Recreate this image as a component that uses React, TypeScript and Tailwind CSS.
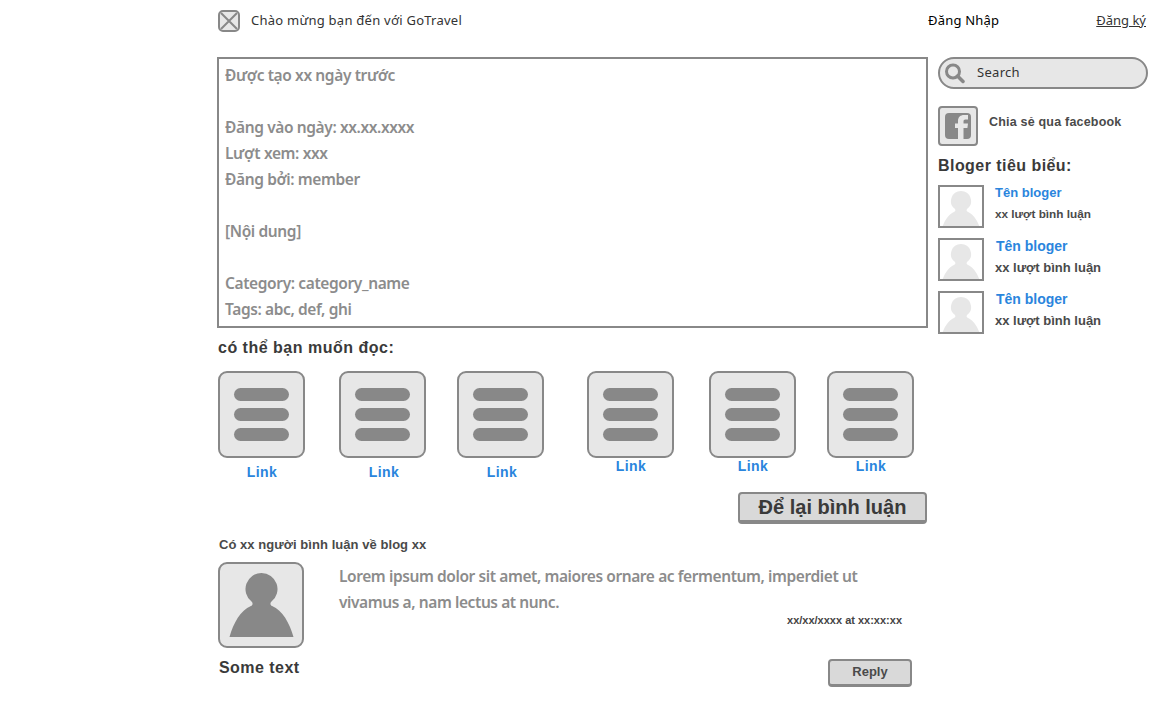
import React from "react";

const Person = ({ color, className }: { color: string; className: string }) => (
  <svg viewBox="0 0 64 64" className={`shrink-0 ${className}`} style={{ fill: color }}>
    <path d="M32 0a16 16 0 0 0-10 28.500c1.600 1.400 1.400 3.600-.6 4.600C11 37.500 4 50 0 64h64c-4-14-11-26.500-21.400-30.900-2-1-2.200-3.200-.6-4.600A16 16 0 0 0 32 0z" />
  </svg>
);

const Tile = ({ className, labelClass }: { className: string; labelClass: string }) => (
  <div className={`flex w-[87px] flex-col items-center ${className}`}>
    <div className="flex h-[87px] w-[87px] flex-col items-center justify-center gap-[7px] rounded-[9px] border-2 border-[#888] bg-[#e7e7e7]">
      <div className="h-[13px] w-[55px] rounded-full bg-[#888]" />
      <div className="h-[13px] w-[55px] rounded-full bg-[#888]" />
      <div className="h-[13px] w-[55px] rounded-full bg-[#888]" />
    </div>
    <a className={`text-[14px] leading-[16px] font-bold tracking-[0.4px] text-[#2a85dd] ${labelClass}`}>Link</a>
  </div>
);

const Blogger = ({ nameClass, subClass, gapClass }: { nameClass: string; subClass: string; gapClass: string }) => (
  <div className="flex h-[43px] items-start">
    <div className="flex h-[43px] w-[46px] items-start justify-center overflow-hidden border-2 border-[#888] bg-white pt-[4px]">
      <Person color="#e7e7e7" className="h-[40px] w-[40px]" />
    </div>
    <div className="ml-[11px] flex flex-col">
      <span className={`font-bold text-[#2a85dd] ${nameClass}`}>Tên bloger</span>
      <span className={`font-bold text-[#4a4a4a] ${subClass} ${gapClass}`}>xx lượt bình luận</span>
    </div>
  </div>
);

export default function App() {
  return (
    <div className="h-[708px] w-[1168px] overflow-hidden bg-white pl-[218px] font-['Liberation_Sans',sans-serif] text-[#333]">
      {/* top bar */}
      <header className="flex h-[57px] items-start pt-[10px]">
        <svg width="22" height="22" viewBox="0 0 22 22" className="shrink-0">
          <rect x="1" y="1" width="20" height="20" rx="4" fill="#e7e7e7" stroke="#888" strokeWidth="2" />
          <path d="M3 3l16 16M19 3L3 19" stroke="#888" strokeWidth="2" />
        </svg>
        <span className="ml-[11px] font-['Noto_Sans',sans-serif] text-[13px] leading-[20px] tracking-[0.25px]">Chào mừng bạn đến với GoTravel</span>
        <span className="ml-[466px] font-['Noto_Sans',sans-serif] text-[13px] leading-[20px] tracking-[0.2px] text-black">Đăng Nhập</span>
        <a className="ml-[97px] font-['Noto_Sans',sans-serif] text-[13px] leading-[20px] underline">Đăng ký</a>
      </header>

      <div className="flex">
        {/* main column */}
        <main className="-ml-px w-[711px]">
          <div className="h-[271px] w-[711px] border-2 border-[#888] px-[6px] pt-[3px] font-['Noto_Sans',sans-serif] text-[15.500px] leading-[26px] font-semibold tracking-[-0.38px] text-[#8c8c8c]">
            <p>Được tạo xx ngày trước</p>
            <p>&nbsp;</p>
            <p>Đăng vào ngày: xx.xx.xxxx</p>
            <p>Lượt xem: xxx</p>
            <p>Đăng bởi: member</p>
            <p>&nbsp;</p>
            <p>[Nội dung]</p>
            <p>&nbsp;</p>
            <p>Category: category_name</p>
            <p>Tags: abc, def, ghi</p>
          </div>

          <div className="pr-px pl-px">
            <h2 className="mt-[10px] text-[16px] leading-[20px] font-bold tracking-[0.5px] text-[#3a3a3a]">có thể bạn muốn đọc:</h2>
            <div className="mt-[13px] flex items-start">
              <Tile className="" labelClass="mt-[6px] ml-[1px]" />
              <Tile className="ml-[34px]" labelClass="mt-[6px] ml-[3px]" />
              <Tile className="ml-[31px]" labelClass="mt-[6px] ml-[3px]" />
              <Tile className="ml-[43px]" labelClass="mt-0 ml-[1px]" />
              <Tile className="ml-[35px]" labelClass="mt-0 ml-[1px]" />
              <Tile className="ml-[31px]" labelClass="mt-0 ml-[1px]" />
            </div>
            <div className="mt-[12px] flex justify-end">
              <button className="h-[32px] w-[189px] rounded-[4px] border-2 border-b-[4px] border-[#888] bg-[#d9d9d9] text-[20px] leading-[24px] font-bold text-[#3a3a3a]">Để lại bình luận</button>
            </div>
            <p className="mt-[13px] ml-px text-[13px] leading-[16px] font-bold tracking-[0.05px] text-[#4a4a4a]">Có xx người bình luận về blog xx</p>

            <div className="mt-[9px] flex">
              <div className="w-[121px] shrink-0">
                <div className="flex h-[86px] w-[86px] items-end justify-center rounded-[9px] border-2 border-[#888] bg-[#e7e7e7] pb-[9px]">
                  <Person color="#888" className="h-[64px] w-[65px]" />
                </div>
                <p className="mt-[10px] ml-px text-[16px] leading-[20px] font-bold tracking-[0.45px] text-[#3a3a3a]">Some text</p>
              </div>
              <div className="w-[573px] pt-px">
                <p className="font-['Noto_Sans',sans-serif] text-[15.500px] leading-[26px] font-semibold tracking-[-0.41px] text-[#8c8c8c]">
                  Lorem ipsum dolor sit amet, maiores ornare ac fermentum, imperdiet ut
                  <br />
                  vivamus a, nam lectus at nunc.
                </p>
                <p className="-mt-[2px] pr-[10px] text-right text-[11px] leading-[14px] font-bold text-[#444]">xx/xx/xxxx at xx:xx:xx</p>
                <div className="mt-[32px] flex justify-end">
                  <button className="h-[28px] w-[84px] rounded-[4px] border-2 border-b-[3px] border-[#888] bg-[#d9d9d9] pb-px text-[13px] leading-[18px] font-bold text-[#4a4a4a]">Reply</button>
                </div>
              </div>
            </div>
          </div>
        </main>

        {/* sidebar */}
        <aside className="ml-[10px] w-[210px]">
          <div className="flex h-[32px] items-center rounded-full border-2 border-[#888] bg-[#e7e7e7] pl-[5px]">
            <svg width="20" height="22" viewBox="0 0 20 22" className="shrink-0">
              <circle cx="8" cy="9.500" r="6.500" fill="none" stroke="#888" strokeWidth="3" />
              <path d="M12.500 14l5.500 5.500" stroke="#888" strokeWidth="3.500" strokeLinecap="round" />
            </svg>
            <span className="ml-[12px] font-['Noto_Sans',sans-serif] text-[13px] tracking-[0.3px]">Search</span>
          </div>

          <div className="mt-[17px] flex items-start">
            <div className="flex h-[40px] w-[40px] items-center justify-center rounded-[4px] border-2 border-[#888] bg-[#e7e7e7]">
              <svg width="26" height="26" viewBox="0 0 26 26">
                <rect width="26" height="26" rx="4" fill="#888" />
                <path d="M13 26V15h-3v-4.500h3V8c0-4 2.500-6 6-6h4v4.500h-2.500c-1.500 0-2 .7-2 2v2H23l-.6 4.500h-3.900V26z" fill="#e7e7e7" />
              </svg>
            </div>
            <span className="mt-[8px] ml-[11px] text-[12.500px] leading-[16px] font-bold tracking-[0.2px] text-[#4a4a4a]">Chia sẻ qua facebook</span>
          </div>

          <h3 className="mt-[10px] text-[16px] leading-[20px] font-bold tracking-[0.45px] text-[#3a3a3a]">Bloger tiêu biểu:</h3>

          <div className="mt-[9px] flex flex-col gap-[10px]">
            <Blogger nameClass="text-[13px] leading-[16px]" subClass="text-[11.750px] leading-[14px]" gapClass="mt-[6px]" />
            <Blogger nameClass="ml-px text-[14px] leading-[16px]" subClass="text-[13px] leading-[14px]" gapClass="mt-[7px]" />
            <Blogger nameClass="ml-px text-[14px] leading-[16px]" subClass="text-[13px] leading-[14px]" gapClass="mt-[7px]" />
          </div>
        </aside>
      </div>
    </div>
  );
}
